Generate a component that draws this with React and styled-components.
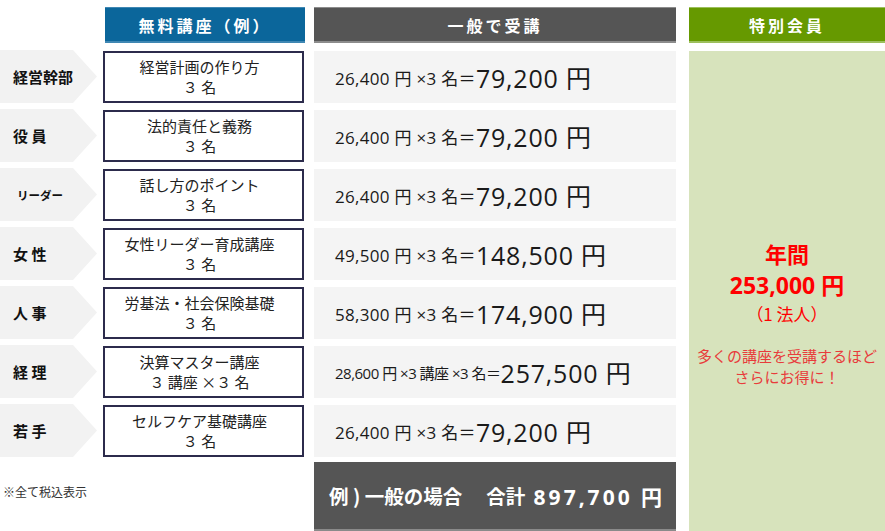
import styled, { createGlobalStyle } from "styled-components";

const GlobalStyle = createGlobalStyle`
  html, body {
    margin: 0;
    padding: 0;
    background: #ffffff;
  }
  body {
    font-family: "Noto Sans CJK JP", "Open Sans", sans-serif;
    color: #222222;
  }
`;

const rows = [
  { label: "経営幹部", course: "経営計画の作り方", count: "３ 名", unit: "26,400 円 ×3 名＝", total: "79,200 円" },
  { label: "役 員", course: "法的責任と義務", count: "３ 名", unit: "26,400 円 ×3 名＝", total: "79,200 円" },
  { label: "リーダー", course: "話し方のポイント", count: "３ 名", unit: "26,400 円 ×3 名＝", total: "79,200 円", small: true },
  { label: "女 性", course: "女性リーダー育成講座", count: "３ 名", unit: "49,500 円 ×3 名＝", total: "148,500 円" },
  { label: "人 事", course: "労基法・社会保険基礎", count: "３ 名", unit: "58,300 円 ×3 名＝", total: "174,900 円" },
  { label: "経 理", course: "決算マスター講座", count: "３ 講座 ×３ 名", unit: "28,600 円 ×3 講座 ×3 名＝", total: "257,500 円", tight: true },
  { label: "若 手", course: "セルフケア基礎講座", count: "３ 名", unit: "26,400 円 ×3 名＝", total: "79,200 円" },
];

const Table = styled.div`
  display: grid;
  grid-template-columns: 103px 211px 375px 196px;
  grid-template-rows: 37px repeat(7, 52px) 67px;
  row-gap: 7px;
  padding-top: 7px;
  width: 885px;
`;

const Head = styled.div`
  height: 36px;
  box-sizing: border-box;
  display: flex;
  align-items: center;
  justify-content: center;
  color: #ffffff;
  font-weight: 700;
  font-size: 16px;
  letter-spacing: 3px;
  background: ${(p) => p.$bg};
  border-top: 1px solid ${(p) => p.$edge};
  border-bottom: 2px solid ${(p) => p.$edge};
  margin-left: ${(p) => p.$offset || 0}px;
  width: ${(p) => p.$w}px;
`;

const Label = styled.div`
  grid-column: 1;
  width: 97px;
  height: 53px;
  margin-top: -1px;
  background: #f2f2f2;
  clip-path: polygon(0 0, 73px 0, 97px 50%, 73px 100%, 0 100%);
  display: flex;
  align-items: center;
  padding-left: ${(p) => (p.$small ? 17 : 13)}px;
  box-sizing: border-box;
  font-weight: 700;
  font-size: ${(p) => (p.$small ? 11.5 : 15)}px;
  color: #111111;
`;

const CourseBox = styled.div`
  grid-column: 2;
  width: 201px;
  height: 52px;
  box-sizing: border-box;
  border: 2px solid #2c2b4c;
  display: flex;
  flex-direction: column;
  align-items: center;
  justify-content: center;
  font-size: 15px;
  line-height: 20px;
  color: #222222;
  padding-right: 8px;
`;

const PriceCell = styled.div`
  grid-column: 3;
  width: 362px;
  background: #f4f4f4;
  display: flex;
  align-items: center;
  padding-left: 21px;
  box-sizing: border-box;
  font-family: "Open Sans", "Noto Sans CJK JP", sans-serif;
  color: #1a1a1a;
  white-space: nowrap;
`;

const Unit = styled.span`
  font-size: ${(p) => (p.$tight ? 15 : 17)}px;
  letter-spacing: ${(p) => (p.$tight ? -0.5 : 0.3)}px;
`;

const Amount = styled.span`
  font-size: 25px;
  letter-spacing: 0.8px;
`;

const Member = styled.div`
  grid-column: 4;
  grid-row: 2 / 10;
  width: 196px;
  background: #d7e3bc;
  display: flex;
  flex-direction: column;
  align-items: center;
  padding-top: 187px;
  box-sizing: border-box;
  text-align: center;
`;

const Yearly = styled.div`
  color: #ff0000;
  font-weight: 700;
  font-size: 22px;
  line-height: 31px;
`;

const Price = styled.div`
  color: #ff0000;
  font-weight: 700;
  font-size: 23px;
  line-height: 32px;
  font-family: "Open Sans", "Noto Sans CJK JP", sans-serif;
`;

const Corp = styled.div`
  color: #ff0000;
  font-size: 17px;
  line-height: 26px;
`;

const Promo = styled.div`
  margin-top: 18px;
  color: #e83b3b;
  font-size: 15px;
  line-height: 21px;
`;

const Note = styled.div`
  grid-column: 1 / 3;
  padding: 19px 0 0 3px;
  font-size: 12px;
  color: #333333;
`;

const Total = styled.div`
  grid-column: 3;
  width: 362px;
  margin-top: -2px;
  background: #555555;
  border-bottom: 2px solid #8a8a8a;
  box-sizing: border-box;
  display: flex;
  align-items: center;
  padding-left: 15px;
  color: #ffffff;
  font-weight: 700;
  font-size: 19.5px;
  white-space: nowrap;
`;

const TotalNum = styled.span`
  font-family: "Open Sans", "Noto Sans CJK JP", sans-serif;
  font-size: 21px;
  letter-spacing: 3px;
`;

export default function App() {
  return (
    <>
      <GlobalStyle />
      <Table>
        <div />
        <Head $bg="#0b669b" $edge="#3f87b3" $offset={2} $w={200}>
          無料講座（例）
        </Head>
        <Head $bg="#555555" $edge="#8c8c8c" $w={362}>
          一般で受講
        </Head>
        <Head $bg="#669900" $edge="#9cbf5c" $w={196}>
          特別会員
        </Head>

        {rows.map((r) => (
          <Row key={r.course} row={r} />
        ))}

        <Member>
          <Yearly>年間</Yearly>
          <Price>253,000 円</Price>
          <Corp>（1 法人）</Corp>
          <Promo>
            多くの講座を受講するほど
            <br />
            さらにお得に！
          </Promo>
        </Member>

        <Note>※全て税込表示</Note>
        <Total>
          例 ) 一般の場合　 合計 <TotalNum>&nbsp;897,700 円</TotalNum>
        </Total>
      </Table>
    </>
  );
}

function Row({ row }) {
  return (
    <>
      <Label $small={row.small}>{row.label}</Label>
      <CourseBox>
        <div>{row.course}</div>
        <div>{row.count}</div>
      </CourseBox>
      <PriceCell>
        <Unit $tight={row.tight}>{row.unit}</Unit>
        <Amount>{row.total}</Amount>
      </PriceCell>
    </>
  );
}
